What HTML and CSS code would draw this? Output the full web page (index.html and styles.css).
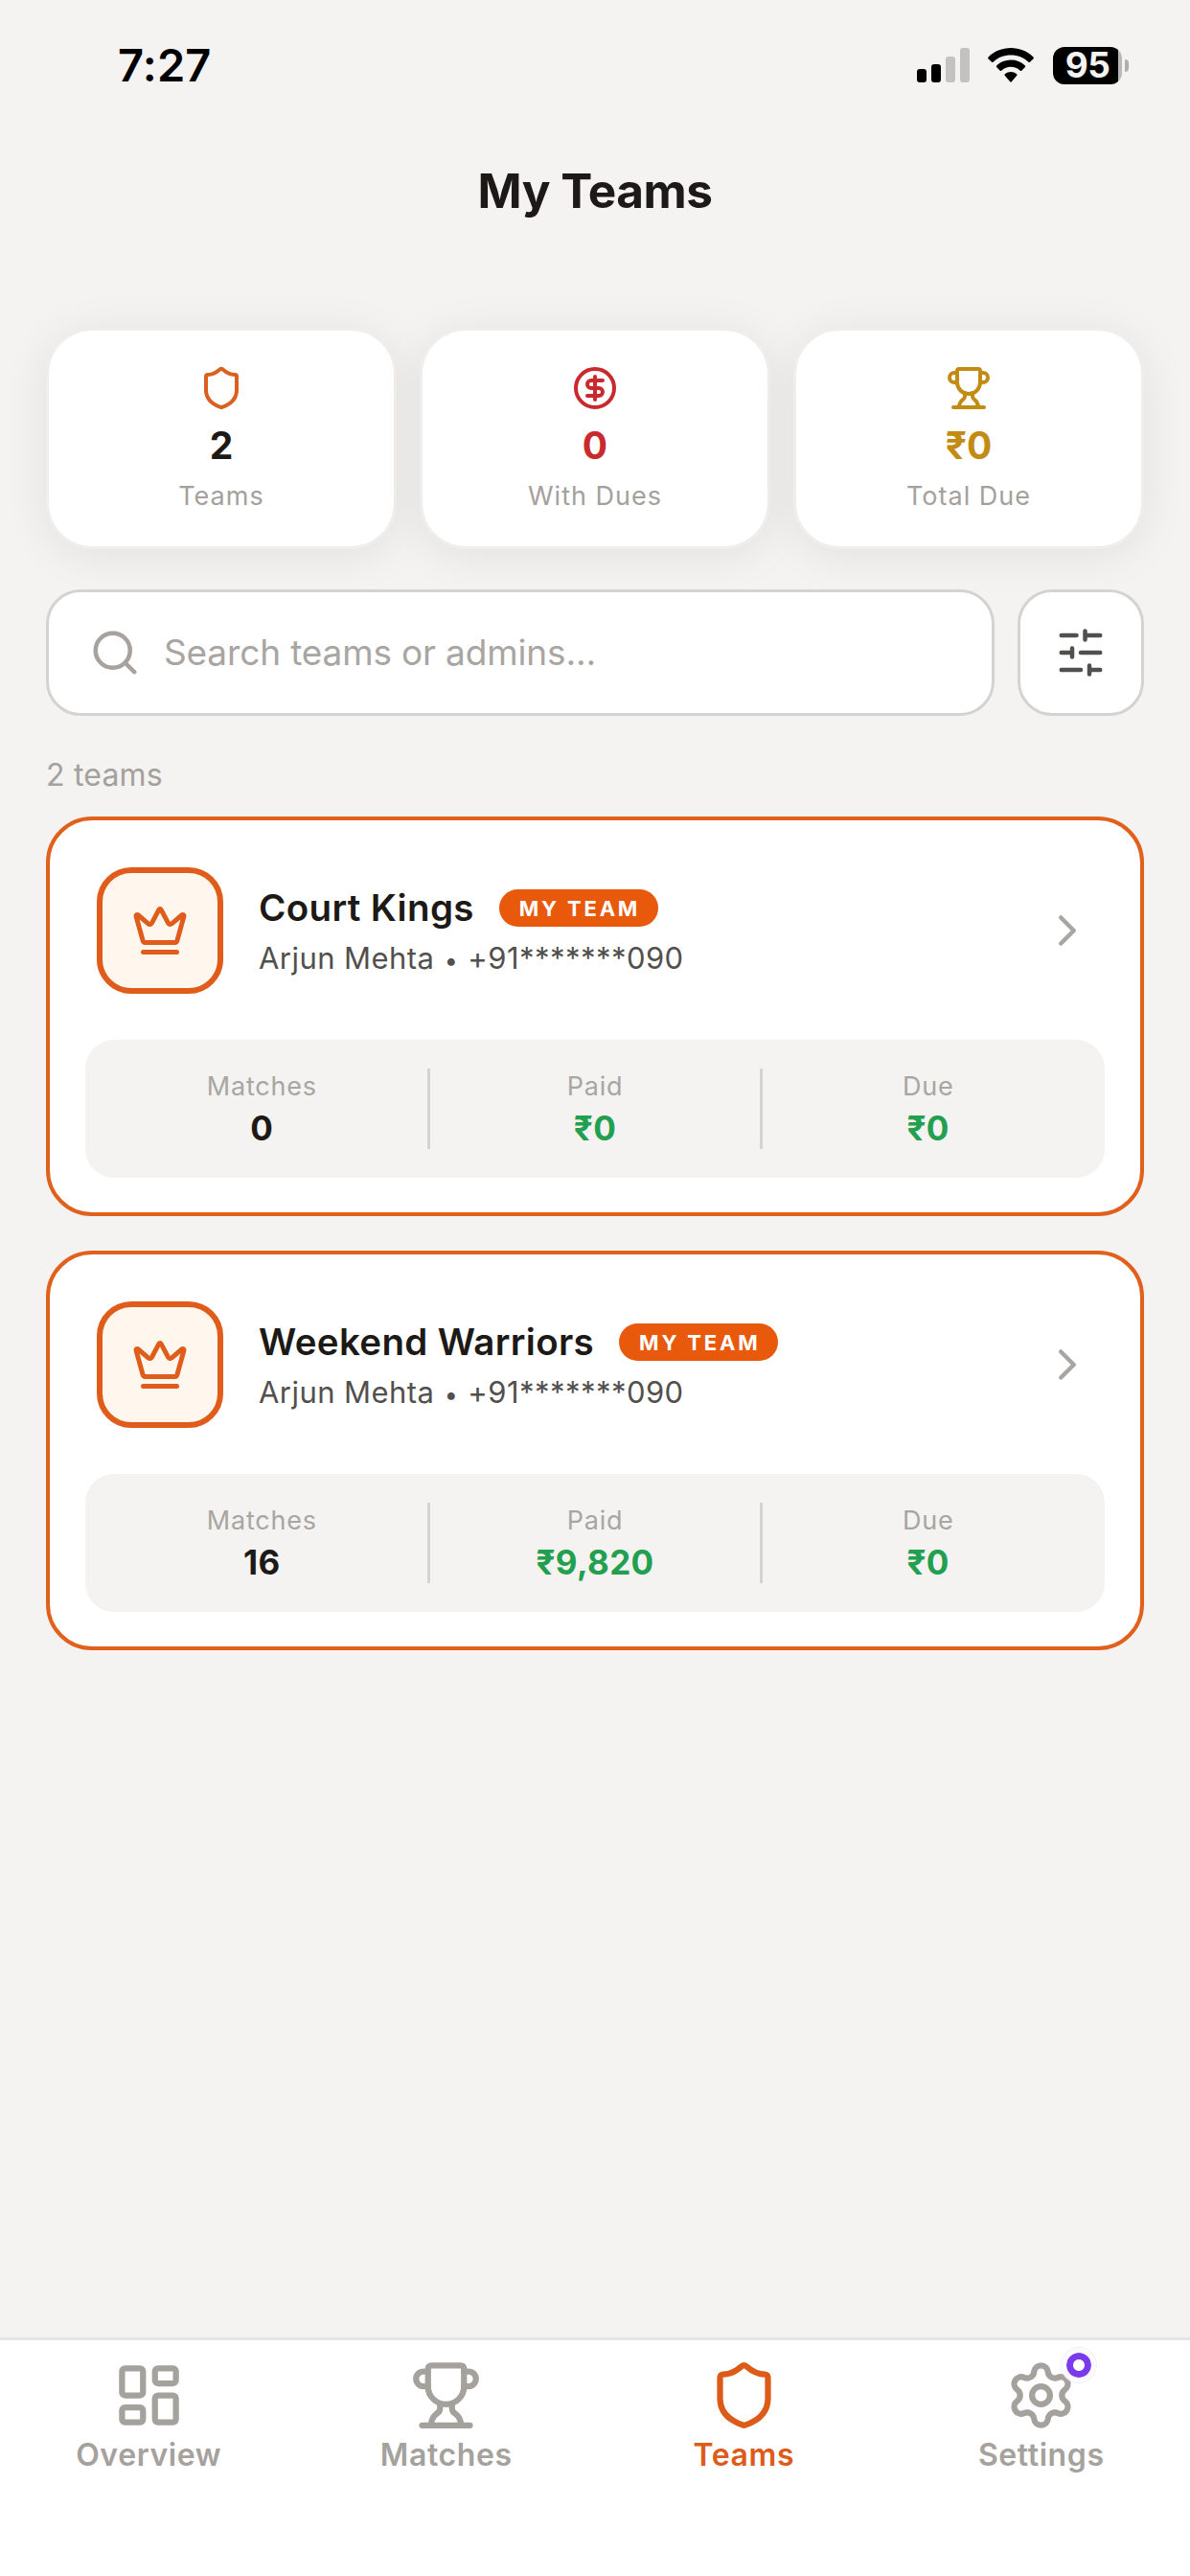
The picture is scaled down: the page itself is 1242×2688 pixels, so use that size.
FILE: index.html
```html
<!DOCTYPE html>
<html lang="en">
<head>
  <title>My Teams</title>
  <meta charset="utf-8">
  <meta name="viewport" content="width=device-width, initial-scale=1">
  <link rel="stylesheet" href="styles.css">
</head>
<body>
  <svg class="sprite" xmlns="http://www.w3.org/2000/svg">
    <symbol id="shield" viewBox="0 0 24 24">
      <path d="M20 13c0 5-3.500 7.500-7.660 8.950a1 1 0 0 1-.67-.01C7.500 20.500 4 18 4 13V6a1 1 0 0 1 1-1c2 0 4.500-1.200 6.240-2.720a1.170 1.170 0 0 1 1.520 0C14.510 3.810 17 5 19 5a1 1 0 0 1 1 1z"/>
    </symbol>
    <symbol id="trophy" viewBox="0 0 24 24">
      <path d="M10 14.660v1.626a2 2 0 0 1-.976 1.696A5 5 0 0 0 7 21.978"/>
      <path d="M14 14.660v1.626a2 2 0 0 0 .976 1.696A5 5 0 0 1 17 21.978"/>
      <path d="M18 9h1.500a1 1 0 0 0 0-5H18"/>
      <path d="M4 22h16"/>
      <path d="M6 9a6 6 0 0 0 12 0V3a1 1 0 0 0-1-1H7a1 1 0 0 0-1 1z"/>
      <path d="M6 9H4.500a1 1 0 0 1 0-5H6"/>
    </symbol>
    <symbol id="crown" viewBox="0 0 24 24">
      <path d="M11.562 3.266a.5.5 0 0 1 .876 0L15.390 8.870a1 1 0 0 0 1.516.294L21.183 5.500a.5.5 0 0 1 .798.519l-2.834 10.246a1 1 0 0 1-.956.734H5.810a1 1 0 0 1-.957-.734L2.020 6.020a.5.5 0 0 1 .798-.519l4.276 3.664a1 1 0 0 0 1.516-.294z"/>
      <path d="M5 21h14"/>
    </symbol>
    <symbol id="chevron" viewBox="0 0 24 24">
      <path d="m9 18 6-6-6-6"/>
    </symbol>
  </svg>

  <header class="status-bar">
    <span class="status-time">7:27</span>
    <div class="status-icons">
      <svg class="signal" viewBox="0 0 55 36">
        <rect x="0" y="22" width="10" height="14" rx="3"/>
        <rect x="15" y="17" width="10" height="19" rx="3"/>
        <rect class="signal-off" x="30" y="9" width="10" height="27" rx="3"/>
        <rect class="signal-off" x="45" y="0" width="10" height="36" rx="3"/>
      </svg>
      <svg class="wifi" viewBox="0 0 48 36">
        <path d="M24 0C15 0 6.500 3.500.6 9.400a1.400 1.400 0 0 0 0 2l3.200 3.200a1.400 1.400 0 0 0 2 0C10.600 10 17 7.500 24 7.500s13.400 2.500 18.200 7.100a1.400 1.400 0 0 0 2 0l3.200-3.200a1.400 1.400 0 0 0 0-2C41.500 3.500 33 0 24 0z"/>
        <path d="M24 12.500c-5.600 0-10.800 2.100-14.700 5.700a1.400 1.400 0 0 0 0 2l3.200 3.200a1.400 1.400 0 0 0 2 0 14 14 0 0 1 19 0 1.400 1.400 0 0 0 2 0l3.200-3.200a1.400 1.400 0 0 0 0-2A21.600 21.600 0 0 0 24 12.500z"/>
        <path d="M24 25c-2.300 0-4.300.8-5.900 2.100a1.400 1.400 0 0 0 0 2.100l4.900 5.900a1.300 1.300 0 0 0 2 0l4.900-5.900a1.400 1.400 0 0 0 0-2.100A9.300 9.300 0 0 0 24 25z"/>
      </svg>
      <div class="battery"><span class="battery-level">95</span></div>
    </div>
  </header>

  <h1 class="page-title">My Teams</h1>

  <main class="content">
    <section class="summary">
      <div class="summary-card">
        <svg class="icon icon-orange"><use href="#shield"/></svg>
        <strong class="summary-value">2</strong>
        <span class="summary-label">Teams</span>
      </div>
      <div class="summary-card">
        <svg class="icon icon-red" viewBox="0 0 24 24">
          <circle cx="12" cy="12" r="10"/>
          <path d="M16 8h-6a2 2 0 1 0 0 4h4a2 2 0 1 1 0 4H8"/>
          <path d="M12 18V6"/>
        </svg>
        <strong class="summary-value red">0</strong>
        <span class="summary-label">With Dues</span>
      </div>
      <div class="summary-card">
        <svg class="icon icon-gold"><use href="#trophy"/></svg>
        <strong class="summary-value gold">₹0</strong>
        <span class="summary-label">Total Due</span>
      </div>
    </section>

    <div class="search-row">
      <div class="search">
        <svg class="icon icon-gray" viewBox="0 0 24 24">
          <circle cx="11" cy="11" r="8"/>
          <path d="m21 21-4.340-4.340"/>
        </svg>
        <span class="search-text">Search teams or admins...</span>
      </div>
      <button class="filter" aria-label="Filters">
        <svg class="icon" viewBox="0 0 24 24">
          <path d="M21 4h-7M10 4H3M21 12h-9M8 12H3M21 20h-5M12 20H3M14 2v4M8 10v4M16 18v4"/>
        </svg>
      </button>
    </div>

    <p class="count">2 teams</p>

    <section class="teams">
      <article class="team">
        <div class="team-head">
          <div class="avatar"><svg class="icon"><use href="#crown"/></svg></div>
          <div class="team-info">
            <div class="team-title">
              <h2 class="team-name">Court Kings</h2>
              <span class="badge">MY TEAM</span>
            </div>
            <p class="team-admin">Arjun Mehta <span class="bullet">•</span> +91*******090</p>
          </div>
          <svg class="icon chevron"><use href="#chevron"/></svg>
        </div>
        <div class="stats">
          <div class="stat"><span class="stat-label">Matches</span><strong class="stat-value">0</strong></div>
          <div class="stat"><span class="stat-label">Paid</span><strong class="stat-value green">₹0</strong></div>
          <div class="stat"><span class="stat-label">Due</span><strong class="stat-value green">₹0</strong></div>
        </div>
      </article>

      <article class="team">
        <div class="team-head">
          <div class="avatar"><svg class="icon"><use href="#crown"/></svg></div>
          <div class="team-info">
            <div class="team-title">
              <h2 class="team-name">Weekend Warriors</h2>
              <span class="badge">MY TEAM</span>
            </div>
            <p class="team-admin">Arjun Mehta <span class="bullet">•</span> +91*******090</p>
          </div>
          <svg class="icon chevron"><use href="#chevron"/></svg>
        </div>
        <div class="stats">
          <div class="stat"><span class="stat-label">Matches</span><strong class="stat-value">16</strong></div>
          <div class="stat"><span class="stat-label">Paid</span><strong class="stat-value green">₹9,820</strong></div>
          <div class="stat"><span class="stat-label">Due</span><strong class="stat-value green">₹0</strong></div>
        </div>
      </article>
    </section>
  </main>

  <nav class="tabs">
    <a class="tab">
      <svg class="icon" viewBox="0 0 24 24">
        <rect width="7" height="9" x="3" y="3" rx="1"/>
        <rect width="7" height="5" x="14" y="3" rx="1"/>
        <rect width="7" height="9" x="14" y="12" rx="1"/>
        <rect width="7" height="5" x="3" y="16" rx="1"/>
      </svg>
      <span>Overview</span>
    </a>
    <a class="tab">
      <svg class="icon"><use href="#trophy"/></svg>
      <span>Matches</span>
    </a>
    <a class="tab tab-active">
      <svg class="icon"><use href="#shield"/></svg>
      <span>Teams</span>
    </a>
    <a class="tab">
      <svg class="icon" viewBox="0 0 24 24">
        <path d="M9.671 4.136a2.340 2.340 0 0 1 4.659 0 2.340 2.340 0 0 0 3.319 1.915 2.340 2.340 0 0 1 2.330 4.033 2.340 2.340 0 0 0 0 3.831 2.340 2.340 0 0 1-2.330 4.033 2.340 2.340 0 0 0-3.319 1.915 2.340 2.340 0 0 1-4.659 0 2.340 2.340 0 0 0-3.320-1.915 2.340 2.340 0 0 1-2.330-4.033 2.340 2.340 0 0 0 0-3.831A2.340 2.340 0 0 1 6.350 6.051a2.340 2.340 0 0 0 3.319-1.915"/>
        <circle cx="12" cy="12" r="3"/>
      </svg>
      <i class="dot"></i>
      <span>Settings</span>
    </a>
  </nav>
</body>
</html>
```
FILE: styles.css
```css
*, *::before, *::after {
  margin: 0;
  padding: 0;
  box-sizing: border-box;
}

body {
  display: flex;
  flex-direction: column;
  height: 2688px;
  background-color: #f4f3f1;
  color: #1c1917;
  font-family: "Inter", "Liberation Sans", sans-serif;
}

.sprite {
  display: none;
}

.icon {
  display: block;
  flex-shrink: 0;
  fill: none;
  stroke: currentColor;
  stroke-width: 2;
  stroke-linecap: round;
  stroke-linejoin: round;
}

/* status bar */

.status-bar {
  display: flex;
  justify-content: space-between;
  align-items: center;
  height: 136px;
  padding: 0 64px 0 123px;
  color: #000000;
}

.status-time {
  padding-bottom: 2px;
  font-size: 47px;
  font-weight: 600;
  letter-spacing: 0.2px;
}

.status-icons {
  display: flex;
  align-items: center;
}

.signal {
  width: 55px;
  height: 36px;
  margin-right: 19px;
}

.signal-off {
  fill: #c3c2c0;
}

.wifi {
  width: 48px;
  height: 36px;
  margin-right: 20px;
}

.battery {
  position: relative;
  width: 72px;
  height: 39px;
  margin-right: 7px;
  border-radius: 12px;
  background: linear-gradient(90deg, #000000 68px, #b9b8b6 68px);
  color: #f4f3f1;
  text-align: center;
}

.battery::after {
  content: "";
  position: absolute;
  top: 13px;
  right: -7px;
  width: 4px;
  height: 13px;
  border-radius: 0 4px 4px 0;
  background-color: #b0afad;
}

.battery-level {
  font-size: 37px;
  font-weight: 700;
  line-height: 38px;
  letter-spacing: -0.5px;
}

.page-title {
  height: 206px;
  font-size: 49.500px;
  font-weight: 700;
  line-height: 126px;
  letter-spacing: -0.5px;
  text-align: center;
}

.content {
  flex: 1;
  padding: 0 48px;
}

/* summary cards */

.summary {
  display: flex;
  gap: 24px;
}

.summary-card {
  display: flex;
  flex: 1;
  flex-direction: column;
  align-items: center;
  height: 231px;
  padding-top: 36px;
  border: 3px solid #efeeec;
  border-radius: 48px;
  background-color: #ffffff;
  background-clip: padding-box;
  box-shadow: 0 6px 48px rgba(0, 0, 0, 0.08);
}

.summary-card .icon {
  width: 48px;
  height: 48px;
}

.summary-value {
  margin-top: 12px;
  font-size: 39px;
  font-weight: 700;
  line-height: 48px;
}

.summary-label {
  margin-top: 11px;
  color: #a3a09d;
  font-size: 27px;
  line-height: 36px;
  letter-spacing: 1px;
}

.icon-orange {
  color: #d9601f;
}

.icon-red,
.red {
  color: #c92a2e;
}

.icon-gold,
.gold {
  color: #c28b14;
}

.icon-gray {
  color: #a8a29e;
}

.green {
  color: #22a04f;
}

/* search */

.search-row {
  position: relative;
  display: flex;
  gap: 24px;
  margin-top: 42px;
}

.search {
  display: flex;
  flex: 1;
  align-items: center;
  gap: 24px;
  height: 132px;
  padding-left: 42px;
  border: 3px solid #d4d3d1;
  border-radius: 36px;
  background-color: #ffffff;
}

.search .icon,
.filter .icon {
  width: 54px;
  height: 54px;
}

.search-text {
  padding-bottom: 2px;
  color: #a8a5a2;
  font-size: 37px;
  letter-spacing: -0.15px;
}

.filter {
  display: flex;
  justify-content: center;
  align-items: center;
  width: 132px;
  height: 132px;
  border: 3px solid #d4d3d1;
  border-radius: 36px;
  background-color: #ffffff;
  color: #52504e;
}

.count {
  height: 105px;
  color: #a3a09d;
  font-size: 32px;
  line-height: 124px;
  letter-spacing: 0.2px;
}

/* team cards */

.teams {
  display: flex;
  flex-direction: column;
  gap: 36px;
}

.team {
  height: 417px;
  padding: 0 37px;
  border: 4px solid #e0601c;
  border-radius: 48px;
  background-color: #ffffff;
}

.team-head {
  display: flex;
  align-items: center;
  height: 229px;
  padding: 1px 12px 0;
}

.avatar {
  display: flex;
  justify-content: center;
  align-items: center;
  width: 132px;
  height: 132px;
  border: 6px solid #e05c1a;
  border-radius: 36px;
  background-color: #fff7ed;
  color: #e05c1a;
}

.avatar .icon {
  width: 60px;
  height: 60px;
}

.team-info {
  flex: 1;
  margin-left: 37px;
  padding-top: 6px;
}

.team-title {
  display: flex;
  align-items: center;
  gap: 26px;
  height: 52px;
}

.team-name {
  font-size: 38.500px;
  font-weight: 600;
  letter-spacing: 0.35px;
}

.badge {
  height: 39px;
  padding: 0 19px 0 21px;
  border-radius: 20px;
  background-color: #e8590c;
  color: #ffffff;
  font-size: 22px;
  font-weight: 700;
  line-height: 40px;
  letter-spacing: 2.800px;
}

.team-admin {
  color: #52504e;
  font-size: 31px;
  line-height: 54px;
  letter-spacing: 0.45px;
}

.bullet {
  margin: 0 1px;
  font-size: 25px;
  line-height: 1;
}

.chevron {
  width: 54px;
  height: 54px;
  color: #a8a5a2;
}

.stats {
  display: flex;
  align-items: center;
  height: 144px;
  padding: 0 12px;
  border-radius: 30px;
  background-color: #f4f3f1;
}

.stat {
  display: flex;
  flex: 1;
  flex-direction: column;
  align-items: center;
  height: 84px;
}

.stat + .stat {
  border-left: 3px solid #d4d3d1;
}

.stat-label {
  margin-top: -2px;
  color: #a8a5a2;
  font-size: 27px;
  line-height: 42px;
  letter-spacing: 0.8px;
}

.stat-value {
  font-size: 35px;
  font-weight: 700;
  line-height: 44px;
  letter-spacing: 0.4px;
}

/* bottom tabs */

.tabs {
  display: flex;
  height: 249px;
  border-top: 3px solid #e7e5e3;
  background-color: #ffffff;
}

.tab {
  position: relative;
  display: flex;
  flex: 1;
  flex-direction: column;
  align-items: center;
  padding-top: 20px;
  color: #a5a19d;
  font-size: 32px;
  font-weight: 600;
  line-height: 50px;
  letter-spacing: 0.6px;
}

.tab .icon {
  width: 75px;
  height: 75px;
}

.tab-active {
  color: #dd5b18;
}

.dot {
  position: absolute;
  top: 8px;
  left: 176px;
  width: 36px;
  height: 36px;
  border: 5px solid #fcfaff;
  border-radius: 50%;
  background: radial-gradient(circle, #ffffff 5.500px, #7c3aed 6.500px);
  background-clip: padding-box;
  box-shadow: 0 0 0 1px #f2edfb;
}
```
